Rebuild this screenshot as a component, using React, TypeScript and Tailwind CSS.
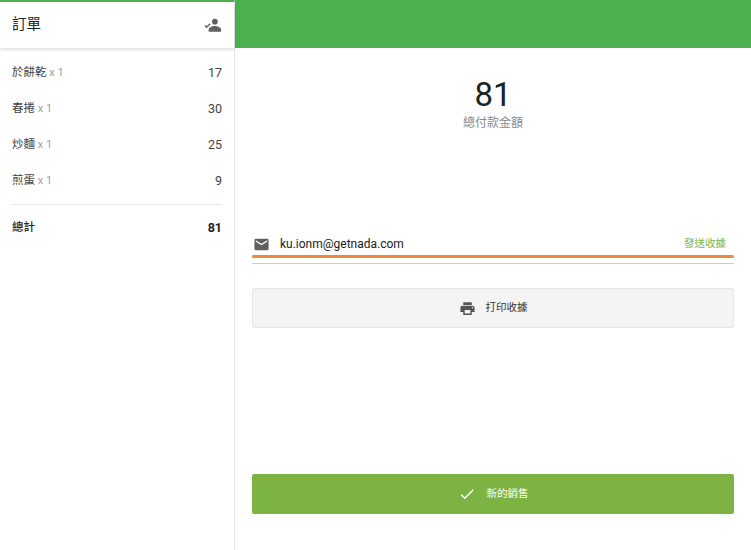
import { MdEmail, MdPrint, MdCheck } from 'react-icons/md'

const ITEMS = [
  { name: '於餅乾', qty: 1, price: 17 },
  { name: '春捲', qty: 1, price: 30 },
  { name: '炒麵', qty: 1, price: 25 },
  { name: '煎蛋', qty: 1, price: 9 },
]

// person with a check mark on its left
function PersonCheckIcon({ className = '' }: { className?: string }) {
  return (
    <svg viewBox="0 0 24 24" width={18} height={18} className={className} fill="currentColor">
      <circle cx="14.5" cy="7.5" r="3.8" />
      <path d="M14.5 13.2c-3.4 0-8.3 1.7-8.3 4.7v3h16.6v-3c0-3-4.9-4.7-8.3-4.7z" />
      <path d="M1.2 12.6l2.4 2.4 4.6-4.6" fill="none" stroke="currentColor" strokeWidth="1.9" />
    </svg>
  )
}

export default function App() {
  const total = ITEMS.reduce((s, i) => s + i.price, 0)

  return (
    <div className="flex w-[751px] h-[550px] overflow-hidden bg-white text-[#212121] font-['Roboto','Noto_Sans_CJK_TC',sans-serif]">
      {/* Order sidebar */}
      <aside className="w-[235px] shrink-0 flex flex-col border-r border-[#e4e4e4] border-t-2 border-t-[#4caf50]">
        <div className="h-[46px] flex items-center justify-between pl-3 pr-3 shadow-[0_2px_3px_rgba(0,0,0,0.12)] z-10">
          <span className="text-[14.5px] text-[#212121]">訂單</span>
          <PersonCheckIcon className="text-[#616161]" />
        </div>
        <div className="flex flex-col px-3 pt-[7px]">
          {ITEMS.map(item => (
            <div key={item.name} className="h-9 flex items-center justify-between">
              <span className="text-[#424242] text-[11.5px]">
                {item.name}
                <span className="text-[#9e9e9e] text-[11px]"> x {item.qty}</span>
              </span>
              <span className="text-[#424242] text-[12.5px]">{item.price}</span>
            </div>
          ))}
          <div className="mt-[5px] border-t border-[#e8e8e8]" />
          <div className="mt-[5px] h-9 flex items-center justify-between font-medium text-[#212121]">
            <span className="text-[11.5px]">總計</span>
            <span className="font-bold text-[12.5px]">{total}</span>
          </div>
        </div>
      </aside>

      {/* Payment panel */}
      <main className="flex-1 flex flex-col">
        <div className="h-12 bg-[#4caf50] shrink-0" />
        <div className="flex-1 flex flex-col px-[17px]">
          <div className="mt-[27px] flex flex-col items-center">
            <span className="text-[33px] leading-[40px] text-[#212121]">{total}</span>
            <span className="text-[12px] leading-4 text-[#8a8a8a]">總付款金額</span>
          </div>

          <div className="mt-[102px] h-[22px] flex items-center justify-between">
            <div className="flex items-center">
              <MdEmail className="text-[#616161] ml-[1px]" size={17} />
              <span className="ml-[10px] text-[12px] text-[#212121]">ku.ionm@getnada.com</span>
            </div>
            <span className="text-[10.5px] text-[#7cb342] mr-[8px]">發送收據</span>
          </div>
          <div className="h-[3px] bg-[#f0883a] rounded-full" />
          <div className="mt-[5px] h-px bg-[#c9ccd3]" />

          <button className="mt-6 h-10 flex items-center justify-center gap-[10px] bg-[#f4f4f4] border border-[#e6e6e6] rounded-[2px]">
            <MdPrint className="text-[#555]" size={17} />
            <span className="text-[10.5px] text-[#333]">打印收據</span>
          </button>

          <button className="mt-[146px] h-10 flex items-center justify-center gap-[11px] bg-[#7cb342] rounded-[2px]">
            <MdCheck className="text-white" size={18} />
            <span className="text-[10.5px] text-white">新的銷售</span>
          </button>
        </div>
      </main>
    </div>
  )
}
